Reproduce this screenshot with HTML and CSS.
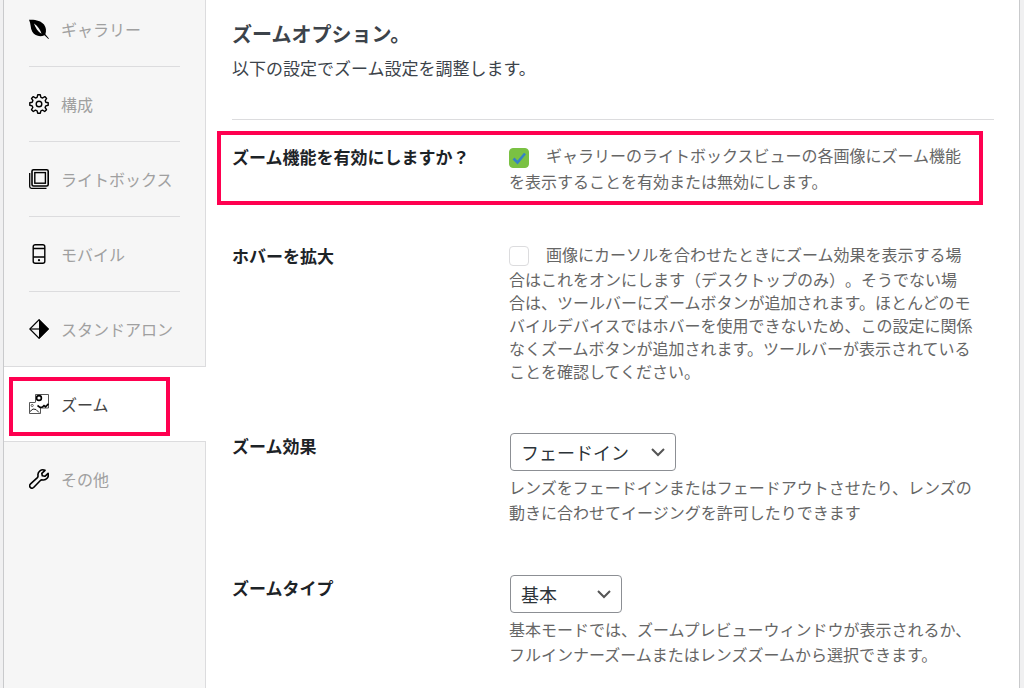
FILE: index.html
```html
<!DOCTYPE html>
<html lang="ja">

<head>
  <meta charset="UTF-8">
  <meta name="viewport" content="width=device-width, initial-scale=1.0">
  <title>ズームオプション</title>
  <link rel="stylesheet" href="styles.css">
</head>

<body>

  <div class="panel">
    <nav class="tabs">
      <a href="#" class="tab">
        <svg class="tab__icon" viewBox="0 0 20 20">
          <path d="M0 .8C6 .3 12 1.800 15 5.500c2.300 3.200 2.400 6.500 1.400 9.700l3.500 4.300-.5.500-3.900-3.800C11 18.200 6 17 3.300 12.800 1.200 9.300 2 4.500 0 .8z" fill="#000" />
          <path d="M5 4.500c1.200 4 4 8.300 7.600 10.300-1.400-4.200-4-8-7.600-10.300z" fill="#f6f6f6" />
        </svg>
        <span>ギャラリー</span>
      </a>
      <a href="#" class="tab">
        <svg class="tab__icon" viewBox="0 0 20 20" fill="none" stroke="#000" stroke-width="1.400" stroke-linejoin="round">
          <path d="M8.700.8h2.600l.6 2.500 1.700.7 2.200-1.400 1.800 1.800L16.200 6.600l.6 1.600 2.400.5v2.600l-2.400.6-.7 1.600 1.400 2.200-1.800 1.800-2.200-1.300-1.600.6-.6 2.400H8.700l-.6-2.400-1.600-.7-2.200 1.400-1.800-1.800 1.300-2.200-.6-1.600-2.400-.6V8.700l2.400-.5.700-1.700-1.400-2.100 1.800-1.800L6.500 4l1.600-.7z" />
          <circle cx="10" cy="10" r="2.800" />
        </svg>
        <span>構成</span>
      </a>
      <a href="#" class="tab">
        <svg class="tab__icon" viewBox="0 0 20 20" fill="none" stroke="#000">
          <rect x="3" y=".8" width="16.200" height="16.200" rx="1.500" stroke-width="1.600" />
          <rect x="5.800" y="3.600" width="10.600" height="10.600" stroke-width="1.400" />
          <path d="M.7 4v13.500q0 1.800 1.800 1.800H17.500" stroke-width="1.300" />
        </svg>
        <span>ライトボックス</span>
      </a>
      <a href="#" class="tab">
        <svg class="tab__icon" viewBox="0 0 20 20" fill="none" stroke="#000" stroke-width="1.400">
          <rect x="4.200" y=".7" width="11.600" height="18.600" rx="2" />
          <path d="M4.200 4.500h11.600M4.200 13h11.600" />
          <circle cx="10" cy="16.200" r="1.100" fill="#000" stroke="none" />
        </svg>
        <span>モバイル</span>
      </a>
      <a href="#" class="tab">
        <svg class="tab__icon" viewBox="0 0 20 20">
          <path d="M10 .8L19.200 10 10 19.200.8 10z" fill="none" stroke="#000" stroke-width="1.200" />
          <path d="M10 0l10 10-10 10z" fill="#000" />
          <path d="M1 10h9" stroke="#000" stroke-width="1.200" />
        </svg>
        <span>スタンドアロン</span>
      </a>
      <a href="#" class="tab tab--active">
        <svg class="tab__icon" viewBox="0 0 20 20" fill="none" stroke="#000">
          <path d="M6.500 8V.5h13v13.500h-8M6.500 8.500h-6v11h11V14" stroke="#444" stroke-width=".9" />
          <circle cx="10" cy="4" r="2.400" stroke-width="1.600" />
          <path d="M8.500 11.500l2.500 1.800 2.500-.3 1.500-1.500 1.500 1.300 3-3" stroke-width="1.600" />
          <circle cx="3.200" cy="11.500" r="1.100" stroke="#444" stroke-width=".8" />
          <path d="M1 17.500l3-2.500 3 .5 3 3" stroke="#222" stroke-width="1" />
        </svg>
        <span>ズーム</span>
      </a>
      <a href="#" class="tab">
        <svg class="tab__icon" viewBox="0 0 20 20" fill="none" stroke="#000" stroke-width="1.600" stroke-linejoin="round">
          <path d="M16 1.300C12.500-.2 8.300 2.300 9 6.700c.1.900 0 1.300-.6 1.900L1.300 15.200c-2 2.200 1 5.300 3.300 3.300l6.800-7c.6-.6 1.100-.8 1.900-.6 4 .7 6.900-2.900 5.800-6.600l-3.200 3-2.600-.5-.5-2.500z" />
        </svg>
        <span>その他</span>
      </a>
    </nav>

    <main class="content">
      <header class="content__header">
        <h1>ズームオプション。</h1>
        <p>以下の設定でズーム設定を調整します。</p>
      </header>

      <form class="settings">
        <div class="row row--marked">
          <label class="row__label" for="zoom">ズーム機能を有効にしますか？</label>
          <p class="row__field">
            <input type="checkbox" id="zoom" checked>ギャラリーのライトボックスビューの各画像にズーム機能<br>
            を表示することを有効または無効にします。
          </p>
        </div>

        <div class="row">
          <label class="row__label" for="hover">ホバーを拡大</label>
          <p class="row__field">
            <input type="checkbox" id="hover">画像にカーソルを合わせたときにズーム効果を表示する場<br>
            合はこれをオンにします（デスクトップのみ）。そうでない場<br>
            合は、ツールバーにズームボタンが追加されます。ほとんどのモ<br>
            バイルデバイスではホバーを使用できないため、この設定に関係<br>
            なくズームボタンが追加されます。ツールバーが表示されている<br>
            ことを確認してください。
          </p>
        </div>

        <div class="row">
          <label class="row__label" for="effect">ズーム効果</label>
          <div class="row__field">
            <select id="effect">
              <option>フェードイン</option>
            </select>
            <p class="row__help">レンズをフェードインまたはフェードアウトさせたり、レンズの<br>
              動きに合わせてイージングを許可したりできます</p>
          </div>
        </div>

        <div class="row">
          <label class="row__label" for="type">ズームタイプ</label>
          <div class="row__field">
            <select id="type">
              <option>基本</option>
              <option>レンズ</option>
            </select>
            <p class="row__help">基本モードでは、ズームプレビューウィンドウが表示されるか、<br>
              フルインナーズームまたはレンズズームから選択できます。</p>
          </div>
        </div>
      </form>
    </main>
  </div>

</body>

</html>
```

FILE: styles.css
```css
:root {
  --clr-mark: #ff0050;
  --clr-border: #dcdcde;
  --clr-text: #3c434a;
  --clr-heading: #1d2327;
  --clr-muted: #666;
}

* {
  box-sizing: border-box;
  margin: 0;
  padding: 0;
}

body {
  font-family: "Noto Sans CJK JP", sans-serif;
  font-size: 16px;
  text-spacing-trim: space-all;
  color: var(--clr-text);
  background-color: #f0f0f1;
}

.panel {
  display: grid;
  grid-template-columns: 202px 1fr;
  min-height: 100vh;
  margin: 0 4px 0 3px;
  border: 1px solid #c9cacc;
  border-width: 0 1px;
  background-color: #fff;
}

/* Sidebar */

.tabs {
  background: linear-gradient(var(--clr-border), var(--clr-border)) right / 1px 100% no-repeat #f6f6f6;
}

.tab {
  position: relative;
  display: flex;
  align-items: center;
  gap: 12px;
  padding: 25px 24px 26px 25px;
  line-height: 24px;
  color: #a0a0a0;
  text-decoration: none;
}

.tab:first-child {
  padding-top: 17px;
}

.tab::before {
  content: "";
  position: absolute;
  left: 25px;
  right: 26px;
  bottom: 0;
  border-bottom: 1px solid var(--clr-border);
}

.tab:last-child::before {
  display: none;
}

.tab:has(+ .tab--active)::before,
.tab--active::before {
  left: 0;
  right: 0;
}

.tab__icon {
  flex: none;
  width: 20px;
  height: 20px;
}

.tab--active {
  color: #444;
  background-color: #fff;
}

.tab--active::after {
  content: "";
  position: absolute;
  inset: 10px 36px 6px 5px;
  border: 4px solid var(--clr-mark);
}

/* Settings */

.content {
  padding: 21px 25px 21px 26px;
}

.content__header {
  height: 99px;
  border-bottom: 1px solid var(--clr-border);
}

h1 {
  font-size: 20px;
  line-height: 26px;
  font-weight: 700;
}

.content__header p {
  margin-top: 9px;
  font-size: 17px;
  line-height: 24px;
}

.settings {
  display: grid;
  gap: 50px;
  padding-top: 24px;
}

.row {
  position: relative;
  display: grid;
  grid-template-columns: 277px 1fr;
}

.row--marked::after {
  content: "";
  position: absolute;
  inset: -13px 11px -12px -15px;
  border: 4px solid var(--clr-mark);
  pointer-events: none;
}

.row__label {
  font-size: 17px;
  line-height: 25px;
  font-weight: 700;
  color: var(--clr-heading);
}

.row__field {
  line-height: 23px;
  color: var(--clr-muted);
}

.row__help {
  margin-top: 4px;
  line-height: 25px;
}

input[type="checkbox"] {
  appearance: none;
  width: 20px;
  height: 20px;
  margin: 2px 17px 2px 0;
  border: 1px solid #dcdcde;
  border-radius: 4px;
  vertical-align: middle;
  background-color: #fff;
}

input[type="checkbox"]:checked {
  border-color: #7ac143;
  background: url("data:image/svg+xml,%3Csvg xmlns='http://www.w3.org/2000/svg' viewBox='0 0 18 18'%3E%3Cpath d='M3.500 9.500L7.500 13.500L15 4.500' fill='none' stroke='%233582c4' stroke-width='2.600'/%3E%3C/svg%3E") center no-repeat #7ac143;
}

select {
  appearance: none;
  display: block;
  height: 38px;
  margin-left: 1px;
  padding: 0 46px 0 10px;
  font-family: inherit;
  font-size: 18px;
  color: #2c3338;
  border: 1px solid #8c8f94;
  border-radius: 4px;
  background: url("data:image/svg+xml,%3Csvg xmlns='http://www.w3.org/2000/svg' viewBox='0 0 16 16'%3E%3Cpath d='M2 5l6 6 6-6' fill='none' stroke='%23555' stroke-width='2'/%3E%3C/svg%3E") right 9px center / 16px 16px no-repeat #fff;
}
```
